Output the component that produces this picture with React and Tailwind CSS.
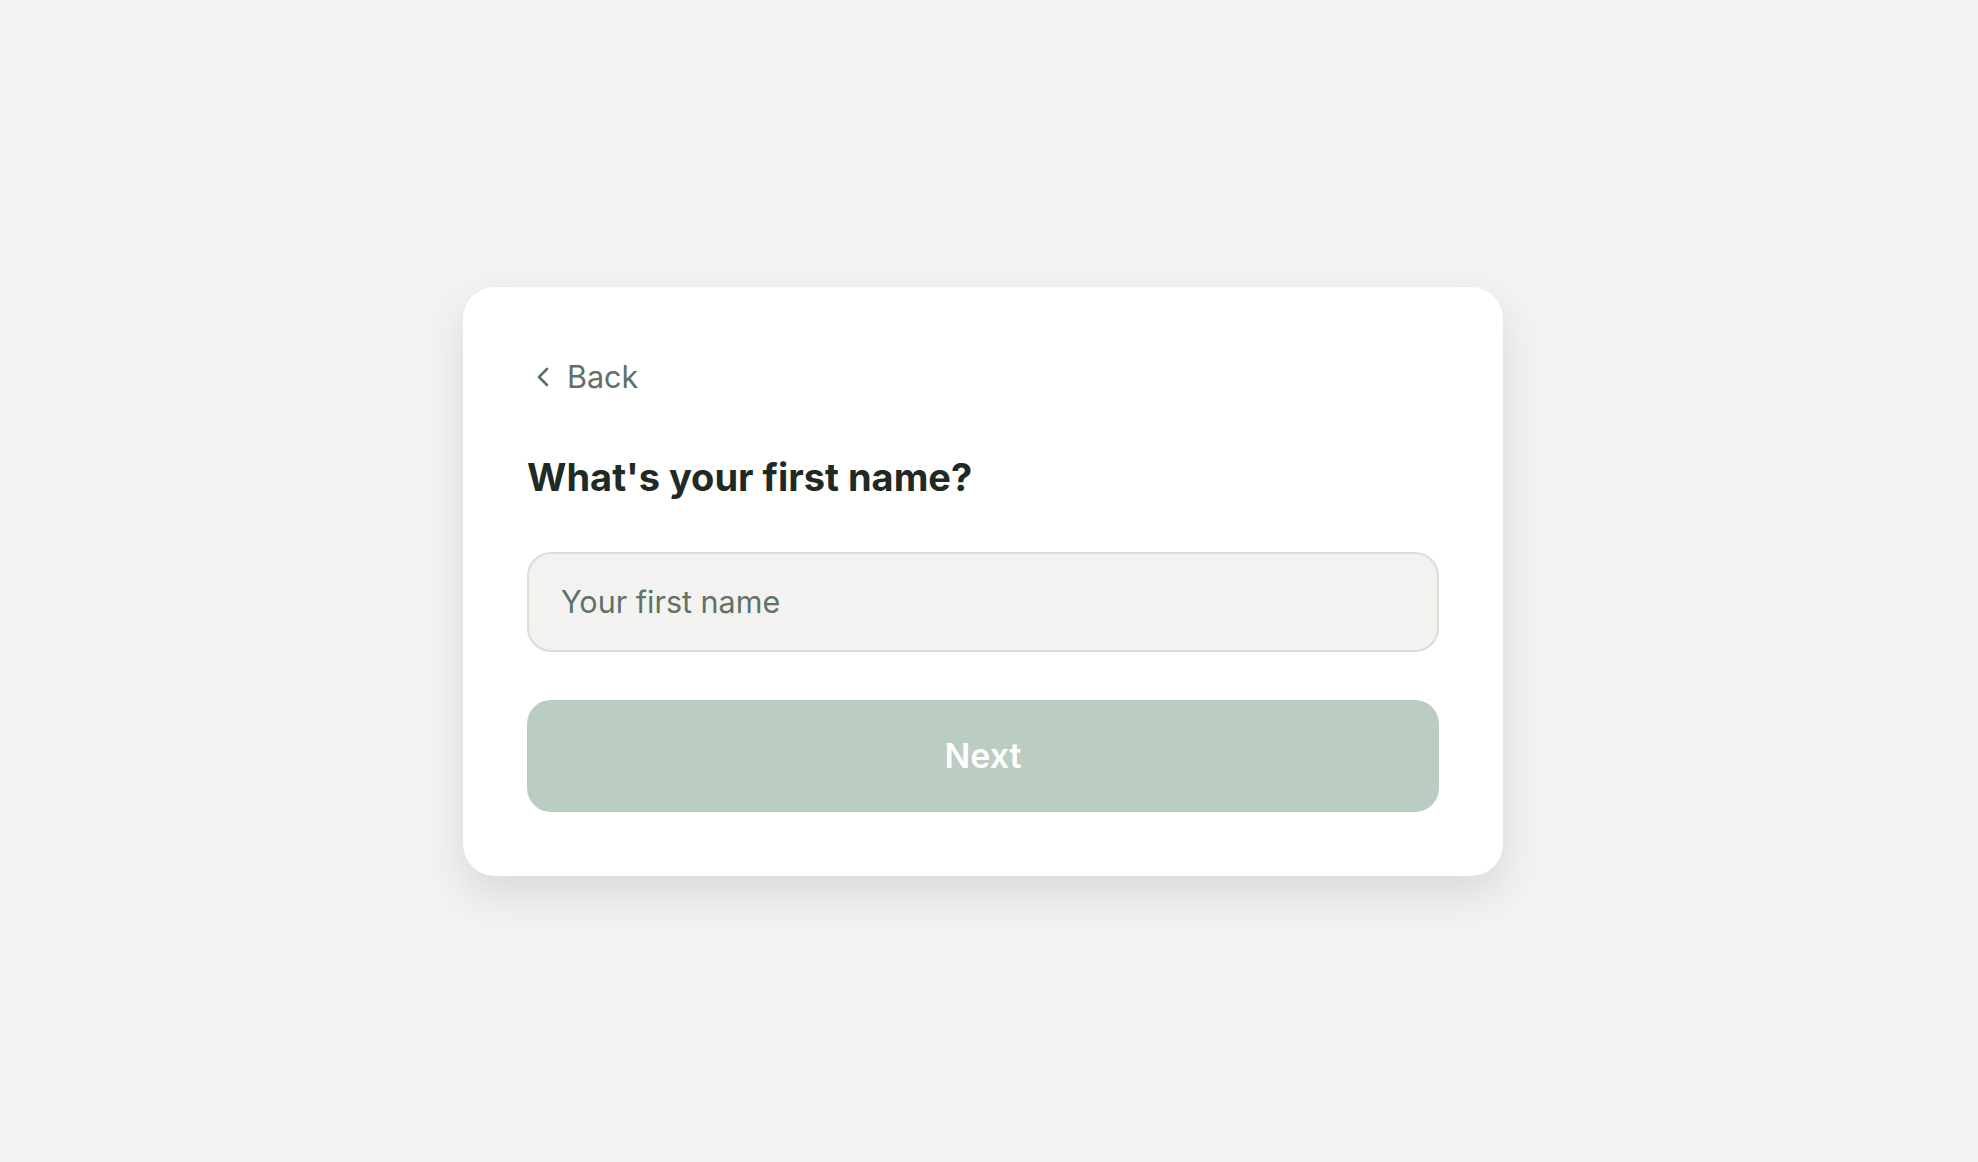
import { useState } from 'react'

export default function App() {
  const [name, setName] = useState('')

  return (
    <div className="min-h-screen w-full bg-[#f3f2f0] flex items-center justify-center pr-[12px]" style={{ fontFamily: 'Inter, "Noto Sans", sans-serif' }}>
      <div className="w-[1040px] bg-white rounded-[32px] p-16 shadow-[0_18px_40px_rgba(0,0,0,0.1)]">
        {/* Back link */}
        <button className="h-[48px] pt-[5px] flex items-center gap-[18px] pl-[10px] text-[30.5px] text-[#5d7166]">
          <svg width="12" height="20" viewBox="0 0 12 20" fill="none">
            <path d="M10 2 L2 10 L10 18" stroke="#5d7166" strokeWidth="2.6" strokeLinecap="round" strokeLinejoin="round" />
          </svg>
          <span>Back</span>
        </button>

        <h1 className="mt-[54px] h-[48px] leading-[48px] text-[38px] font-bold text-[#1f2a24]">
          What's your first name?
        </h1>

        <input
          value={name}
          onChange={e => setName(e.target.value)}
          placeholder="Your first name"
          className="mt-[51px] w-full h-[100px] rounded-[24px] bg-[#f3f2f0] border-2 border-[#dedcd7] px-[32px] text-[30.5px] text-[#1f2a24] placeholder:text-[#5f7268] outline-none"
        />

        <button className="mt-[48px] w-full h-[112px] rounded-[24px] bg-[#bbccc1] text-white text-[34px] font-semibold">
          Next
        </button>
      </div>
    </div>
  )
}
